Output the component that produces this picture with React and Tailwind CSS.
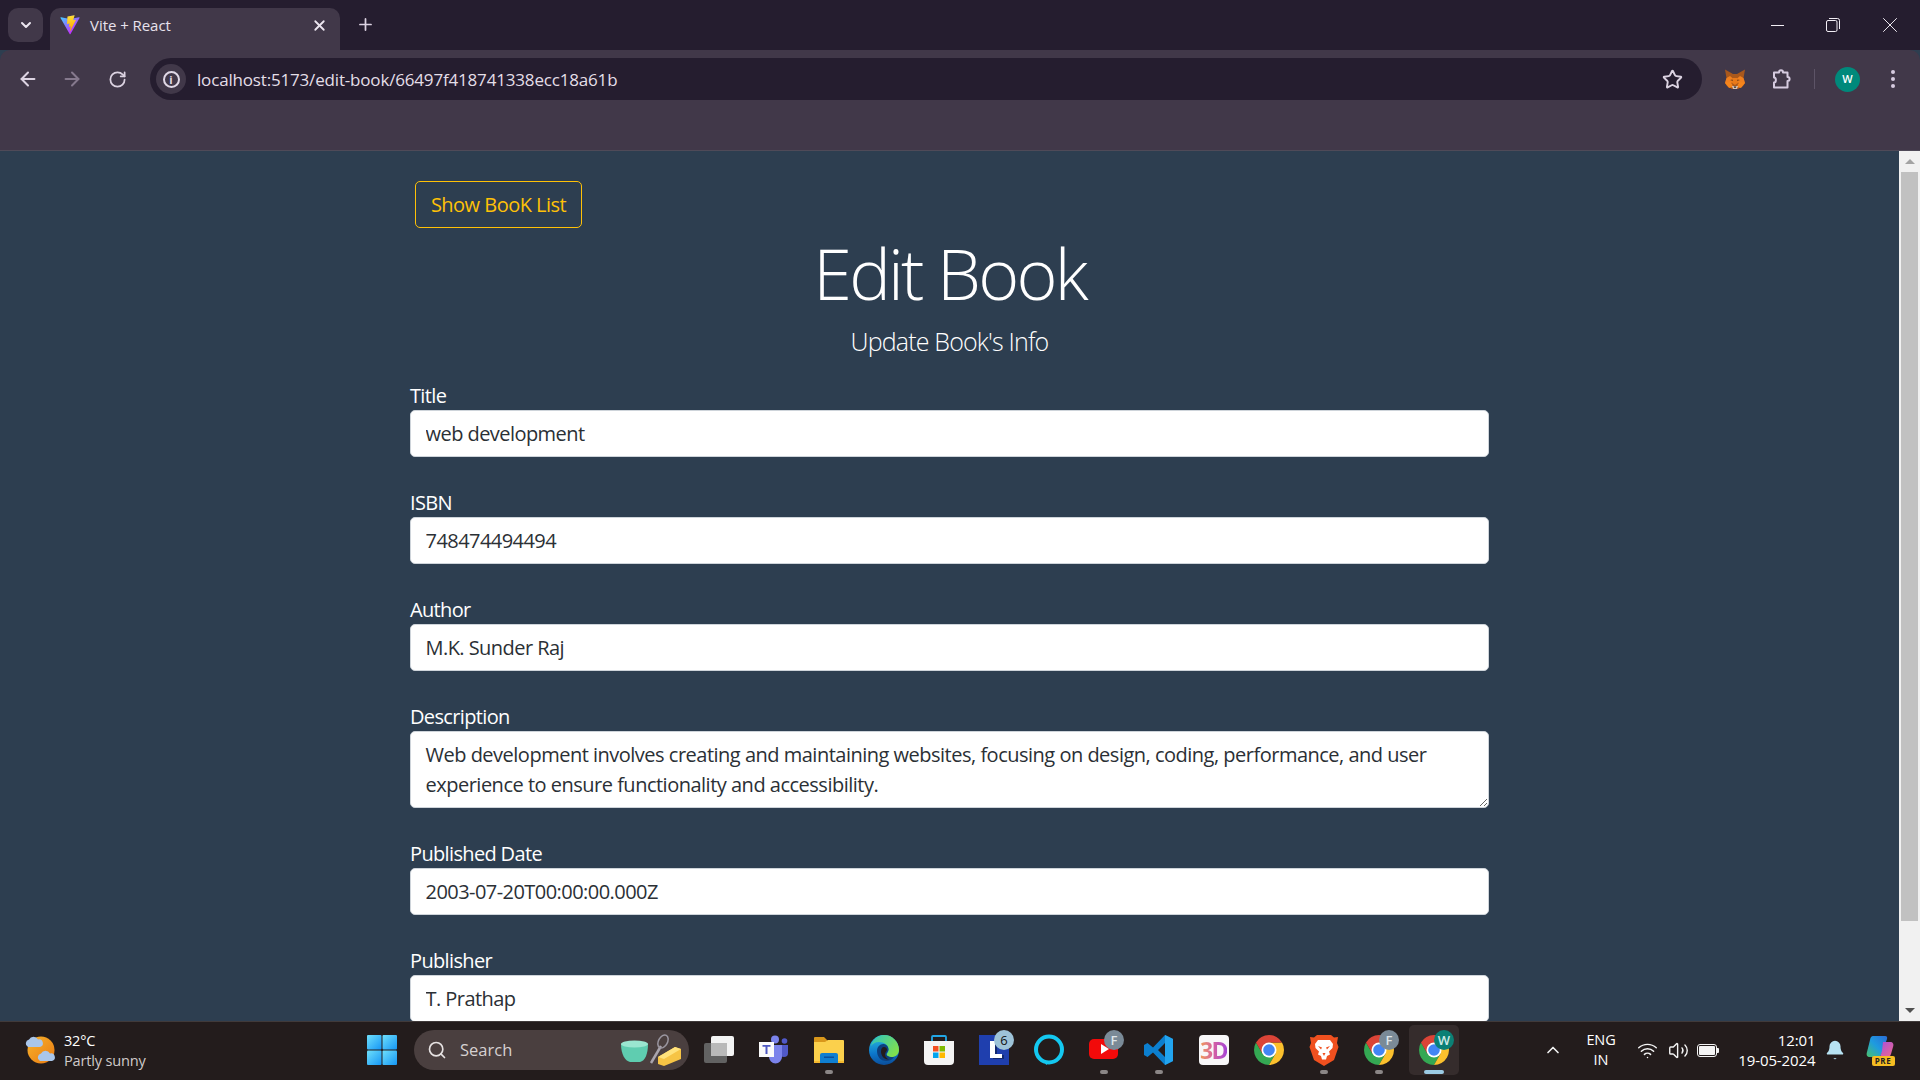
import React from "react";
import { ArrowLeft, ArrowRight, RotateCw, Star, ChevronDown, ChevronUp, X, Plus, Search, Wifi, Volume2, Bell } from "lucide-react";

const fields = [
  { label: "Title", value: "web development" },
  { label: "ISBN", value: "748474494494" },
  { label: "Author", value: "M.K. Sunder Raj" },
  {
    label: "Description",
    value:
      "Web development involves creating and maintaining websites, focusing on design, coding, performance, and user experience to ensure functionality and accessibility.",
    area: true,
  },
  { label: "Published Date", value: "2003-07-20T00:00:00.000Z" },
  { label: "Publisher", value: "T. Prathap" },
];

const ViteIcon = () => (
  <svg width="20" height="20" viewBox="0 0 410 404">
    <defs>
      <linearGradient id="vite-a" x1="6" y1="33" x2="235" y2="344" gradientUnits="userSpaceOnUse">
        <stop stopColor="#41D1FF" />
        <stop offset="1" stopColor="#BD34FE" />
      </linearGradient>
      <linearGradient id="vite-b" x1="194" y1="8" x2="236" y2="293" gradientUnits="userSpaceOnUse">
        <stop stopColor="#FFEA83" />
        <stop offset="0.08" stopColor="#FFDD35" />
        <stop offset="1" stopColor="#FFA800" />
      </linearGradient>
    </defs>
    <path
      fill="url(#vite-a)"
      d="M399.641 59.5246L215.643 388.545C211.844 395.338 202.084 395.378 198.228 388.618L10.5817 59.5563C6.38087 52.1896 12.6802 43.2665 21.0281 44.7586L205.223 77.6824C206.398 77.8924 207.601 77.8904 208.776 77.6763L389.119 44.8058C397.439 43.2894 403.768 52.1434 399.641 59.5246Z"
    />
    <path
      fill="url(#vite-b)"
      d="M292.965 1.5744L156.801 28.2552C154.563 28.6937 152.906 30.5903 152.771 32.8664L144.395 174.33C144.198 177.662 147.258 180.248 150.51 179.498L188.42 170.749C191.967 169.931 195.172 173.055 194.443 176.622L183.18 231.775C182.422 235.487 185.907 238.661 189.532 237.56L212.947 230.446C216.577 229.344 220.065 232.527 219.297 236.242L201.398 322.875C200.278 328.294 207.486 331.249 210.492 326.603L212.5 323.5L323.454 102.072C325.312 98.3645 322.108 94.137 318.036 94.9228L279.014 102.454C275.347 103.161 272.227 99.746 273.262 96.1583L298.731 7.86689C299.767 4.27314 296.636 0.855181 292.965 1.5744Z"
    />
  </svg>
);

const FoxIcon = () => (
  <svg width="22" height="22" viewBox="0 0 22 22">
    <path fill="#a9581c" d="M1 1.500l8 4.500h4l8-4.500-1.500 8.500L21 15l-2 3-5 3H8l-5-3-2-3 1.500-5z" />
    <path fill="#f0801f" d="M2.500 10l3.500-2 3.500 3-1 3.500-3.500 1L1 15zM19.500 10l-3.500-2-3.500 3 1 3.500 3.500 1L21 15z" />
    <path fill="#f6851b" d="M1 15l5-1 2 2 1 3-4 1zM21 15l-5-1-2 2-1 3 4 1z" />
    <path fill="#e87a1a" d="M9 10h4l1 5-3 2-3-2z" />
    <path fill="#6b3a16" d="M6 12l2.500-.5.5 1.500zM16 12l-2.500-.5-.5 1.500z" />
    <path fill="#d7c1b3" d="M8 18h6l-1 3H9z" />
    <path fill="#222" d="M9.700 18.500h2.600l-.5 1.200h-1.600z" />
  </svg>
);

const PuzzleIcon = () => (
  <svg width="22" height="22" viewBox="0 0 22 22" fill="none" stroke="#d6cbe0" strokeWidth="2">
    <path d="M4 4.500h5c0-3 4-3 4 0h4.500v4.500c2.800 0 2.800 4 0 4v6.500H4v-5c2.500 0 2.500-5 0-5z" strokeLinejoin="round" />
  </svg>
);

const RestoreIcon = () => (
  <svg width="14" height="14" viewBox="0 0 14 14" fill="none" stroke="#f2eef5" strokeWidth="1">
    <rect x="0.5" y="2.500" width="10.500" height="11" rx="1.500" />
    <path d="M3 .5h8.500a2 2 0 0 1 2 2V11" />
  </svg>
);

const WindowsLogo = () => (
  <svg width="30" height="30" viewBox="0 0 30 30">
    <defs>
      <linearGradient id="win-a" x1="0" y1="0" x2="1" y2="1">
        <stop stopColor="#6fe0fb" />
        <stop offset="1" stopColor="#1596f5" />
      </linearGradient>
    </defs>
    <rect x="0" y="0" width="14.500" height="14.500" rx="1" fill="url(#win-a)" />
    <rect x="15.500" y="0" width="14.500" height="14.500" rx="1" fill="url(#win-a)" />
    <rect x="0" y="15.500" width="14.500" height="14.500" rx="1" fill="url(#win-a)" />
    <rect x="15.500" y="15.500" width="14.500" height="14.500" rx="1" fill="url(#win-a)" />
  </svg>
);

const Weather = () => (
  <svg width="32" height="32" viewBox="0 0 32 32">
    <defs>
      <linearGradient id="sun-a" x1="0" y1="0" x2="1" y2="1">
        <stop stopColor="#f7b32b" />
        <stop offset="1" stopColor="#ea7a12" />
      </linearGradient>
    </defs>
    <circle cx="17" cy="16" r="13.500" fill="url(#sun-a)" />
    <path fill="#a9c6ea" d="M4 13a4 4 0 0 1 1-7.500 5 5 0 0 1 9 0 3.800 3.800 0 0 1 2 7.500z" />
    <path fill="#a9c6ea" d="M16 27a4 4 0 0 1 1-7.500 5 5 0 0 1 9 0 3.800 3.800 0 0 1 2 7.500z" />
  </svg>
);

const SearchArt = () => (
  <svg width="62" height="32" viewBox="0 0 62 32">
    <path fill="#5fcdb0" d="M1 10h27c0 10-3 17-8 18h-10C5 27 1 20 1 10z" />
    <ellipse cx="14.500" cy="10" rx="13.500" ry="3.500" fill="#9ae6d0" />
    <path stroke="#a9a4ad" strokeWidth="2.500" d="M31 29L41 12" fill="none" />
    <ellipse cx="43" cy="7.500" rx="4.500" ry="7" fill="none" stroke="#9a96a0" strokeWidth="1.500" transform="rotate(28 43 7.500)" />
    <path fill="#f6c445" d="M38 23l17-10 6 2v10l-17 7-6-2z" />
    <path fill="#ffe27c" d="M38 23l17-10 6 2-17 10z" />
  </svg>
);

const TaskView = () => (
  <svg width="32" height="32" viewBox="0 0 32 32">
    <rect x="1" y="9" width="23" height="20" rx="2" fill="#626262" />
    <rect x="8" y="2" width="23" height="20" rx="2" fill="#f3f3f3" />
    <rect x="8" y="9" width="16" height="13" fill="#b9b9b9" />
  </svg>
);

const Teams = () => (
  <svg width="32" height="32" viewBox="0 0 32 32">
    <circle cx="17" cy="5.500" r="4" fill="#7b83eb" />
    <circle cx="26.500" cy="7" r="2.800" fill="#5059c9" />
    <path fill="#5059c9" d="M22 11h8v8a4 4 0 0 1-8 0z" />
    <path fill="#7b83eb" d="M11 11h13v12a6.500 6.500 0 0 1-13 0z" />
    <rect x="1" y="8" width="15" height="15" fill="#fafafa" />
    <path fill="#4e58c2" d="M4.500 11h8v1.800h-3V20h-2v-7.200h-3z" />
  </svg>
);

const Folder = () => (
  <svg width="32" height="32" viewBox="0 0 32 32">
    <path fill="#d9971b" d="M1 4a1 1 0 0 1 1-1h9l4 4v4H1z" />
    <path fill="#fbd04c" d="M1 8h11l3-2h15a1 1 0 0 1 1 1v22H1z" />
    <path fill="#f5b82e" d="M1 27h30v2H1z" />
    <path fill="#0f7fd1" d="M7 21a2 2 0 0 1 2-2h14a2 2 0 0 1 2 2v8H7z" />
    <rect x="11" y="22.500" width="10" height="1.500" fill="#0a4f9c" />
  </svg>
);

const Edge = () => (
  <svg width="32" height="32" viewBox="0 0 32 32">
    <defs>
      <linearGradient id="edge-a" x1="0.2" y1="0" x2="0.3" y2="1">
        <stop stopColor="#2cc0dd" />
        <stop offset="0.6" stopColor="#0c78cc" />
        <stop offset="1" stopColor="#0b4f9c" />
      </linearGradient>
      <linearGradient id="edge-b" x1="0" y1="0" x2="1" y2="0.6">
        <stop stopColor="#2bc3c4" />
        <stop offset="1" stopColor="#80e04e" />
      </linearGradient>
    </defs>
    <circle cx="16" cy="16" r="15" fill="url(#edge-a)" />
    <path fill="url(#edge-b)" d="M16 1a15 15 0 0 1 15 15c0 4.500-3.500 7-7.500 7-3 0-5-1-5-2.500 0-1 2-1.500 2-5C20.500 11 16 8 11 8 7 8 4.500 10 3 12 4.500 6 9.500 1 16 1z" />
    <path fill="#0d3f7d" d="M9 17c0-4.500 3.500-7.500 7-7 3 .5 4.500 3 4.500 5.500 0 2-2 3-2 4.500 0 2.500 4 3.500 7.500 3-2 3-5 4-7.500 4C12 27 9 22 9 17z" />
    <path fill="#241c1c" d="M16 13c2 0 3 1.500 3 2.500 0 1.500-2 3-2 5 0 2.500 2 4 4 5-5 .5-8-4-8-8 0-2.500 1-4.500 3-4.500z" />
  </svg>
);

const Store = () => (
  <svg width="32" height="32" viewBox="0 0 32 32">
    <path fill="none" stroke="#22a7e6" strokeWidth="1.800" d="M9 8V3a1 1 0 0 1 1-1h12a1 1 0 0 1 1 1v5" />
    <path fill="#f4f4f4" d="M1 7h30v20a4 4 0 0 1-4 4H5a4 4 0 0 1-4-4z" />
    <rect x="10" y="12" width="5.500" height="5.500" fill="#f25022" />
    <rect x="16.500" y="12" width="5.500" height="5.500" fill="#7fba00" />
    <rect x="10" y="18.500" width="5.500" height="5.500" fill="#00a4ef" />
    <rect x="16.500" y="18.500" width="5.500" height="5.500" fill="#ffb900" />
  </svg>
);

const LIcon = () => (
  <svg width="30" height="30" viewBox="0 0 30 30">
    <rect width="30" height="30" fill="#1f3fae" />
    <path fill="#13296f" d="M14 7h4v13h7v4H14z" />
    <path fill="#fff" d="M11 6h5v13h7v4H11z" />
  </svg>
);

const Alexa = () => (
  <svg width="32" height="32" viewBox="0 0 32 32" fill="none">
    <circle cx="16" cy="15.500" r="13" stroke="#14c8f0" strokeWidth="4" />
    <path fill="#14c8f0" d="M12 27l1 4 5-3z" />
  </svg>
);

const Youtube = () => (
  <svg width="32" height="32" viewBox="0 0 32 32">
    <rect x="1" y="5" width="29" height="20" rx="5" fill="#f20a0a" />
    <path fill="#fff" d="M13 10l8 5-8 5z" />
  </svg>
);

const VSCode = () => (
  <svg width="32" height="32" viewBox="0 0 32 32">
    <path fill="#0c7fcf" fillRule="evenodd" d="M22 1l8 4v22l-8 4L10 18.500 4.500 23 1 21V11l3.500-2L10 13.500zM22 9l-7 7 7 7z" />
    <path fill="#22a4ef" d="M22 1l8 4v22l-8 4z" />
  </svg>
);

const ThirtyD = () => (
  <div className="flex h-[30px] w-[30px] items-center justify-center rounded-[4px] bg-[#f8f7f8]">
    <span className="bg-gradient-to-r from-[#f09a4e] via-[#d65fa0] to-[#a43fd6] bg-clip-text text-[23px] leading-none font-bold tracking-[-1.5px] text-transparent">
      3D
    </span>
  </div>
);

const Chrome = () => (
  <svg width="30" height="30" viewBox="0 0 30 30">
    <path fill="#34a853" transform="rotate(240 15 15)" d="M2.010 7.500A15 15 0 0 1 27.990 7.500L15 7.500 8.500 18.750Z" />
    <path fill="#fbc02d" transform="rotate(120 15 15)" d="M2.010 7.500A15 15 0 0 1 27.990 7.500L15 7.500 8.500 18.750Z" />
    <path fill="#db4437" d="M2.010 7.500A15 15 0 0 1 27.990 7.500L15 7.500 8.500 18.750Z" />
    <circle cx="15" cy="15" r="7.500" fill="#fff" />
    <circle cx="15" cy="15" r="5.800" fill="#4285f4" />
  </svg>
);

const Brave = () => (
  <svg width="30" height="32" viewBox="0 0 30 32">
    <path fill="#f0501f" d="M8 1h14l3 2.500L29 3l-1 6 1.500 4L25 26l-10 6L5 26 .5 13 2 9 1 3l4 .5z" />
    <path fill="#fff" d="M9 6h12l3 4-.5 4-3.500 3.500 1 3-3 1.500-1 3.500h-4L12 22l-3-1.500 1-3L6.500 14 6 10z" />
    <path fill="#f0501f" d="M9 12l4 1.500-1 2zM21 12l-4 1.500 1 2zM13.500 19h3l-1.500 3z" />
  </svg>
);

const Copilot = () => (
  <div className="relative h-[32px] w-[30px]">
    <svg width="30" height="26" viewBox="0 0 30 26">
      <defs>
        <linearGradient id="cop-a" x1="0" y1="1" x2="1" y2="0">
          <stop stopColor="#49c26c" />
          <stop offset="0.5" stopColor="#1e9be0" />
          <stop offset="1" stopColor="#2a6cd6" />
        </linearGradient>
        <linearGradient id="cop-b" x1="0" y1="0" x2="1" y2="1">
          <stop stopColor="#a24de0" />
          <stop offset="1" stopColor="#f06a8c" />
        </linearGradient>
      </defs>
      <path fill="url(#cop-a)" d="M8 2h12c2 0 2.500 1 2 3l-5 14c-1 3-3 4-6 4H5c-3 0-4-2-3-5l3-12C5.500 3 6.500 2 8 2z" />
      <path fill="url(#cop-b)" d="M18 8h7c3 0 4 2 3 5l-2 7c-1 3-3 4-5 4h-9c4-1 4-4 5-7z" />
    </svg>
    <span className="absolute right-0 bottom-0 flex h-[10px] w-[23px] items-center justify-center rounded-[2px] bg-[#f5bd22] text-[8px] font-bold tracking-[0.5px] text-[#222]">
      PRE
    </span>
  </div>
);

const Badge = ({ children, className }) => (
  <span
    className={`absolute top-[8px] right-[7px] flex h-[20px] w-[20px] items-center justify-center rounded-full text-[13px] leading-none ${className}`}
  >
    {children}
  </span>
);

const TaskItem = ({ children, running, active, badge }) => (
  <div className="relative flex h-full w-[55px] shrink-0 items-center justify-center">
    {active && <div className="absolute top-[3px] left-[3px] h-[50px] w-[50px] rounded-[5px] bg-[#352c2c]" />}
    <div className="relative flex h-[32px] w-[32px] items-center justify-center">{children}</div>
    {badge}
    {running && <span className="absolute top-[48px] left-[24px] h-[4px] w-[8px] rounded-full bg-[#8b8686]" />}
    {active && <span className="absolute top-[48px] left-[18px] h-[4px] w-[20px] rounded-full bg-[#9bcbe4]" />}
  </div>
);

export default function App() {
  return (
    <div className="flex h-screen w-full flex-col overflow-hidden bg-[#2d3e50] font-['Open_Sans',sans-serif]">
      {/* tab strip */}
      <div className="flex h-[50px] shrink-0 items-end bg-[#251d2f] pl-[8px]">
        <div className="mb-[8px] flex h-[34px] w-[35px] items-center justify-center rounded-[10px] bg-[#413849]">
          <ChevronDown size={16} strokeWidth={3} color="#ece6f0" />
        </div>
        <div className="ml-[7px] flex h-[42px] w-[290px] items-center rounded-t-[10px] bg-[#413849] pr-[12px] pb-[8px] pl-[10px]">
          <ViteIcon />
          <span className="ml-[10px] flex-1 text-[15px] tracking-[-0.05px] text-[#e8e2ec]">Vite + React</span>
          <X size={17} strokeWidth={2.5} color="#ece6f0" />
        </div>
        <div className="mb-[16px] ml-[15px] flex h-[20px] w-[20px] items-center justify-center">
          <Plus size={19} strokeWidth={2.2} color="#dcd3e2" />
        </div>
        <div className="flex-1" />
        <div className="mb-[13px] flex h-[24px] items-center pr-[17px]">
          <div className="mr-[42px] h-px w-[13px] bg-[#f2eef5]" />
          <div className="mr-[37px]">
            <RestoreIcon />
          </div>
          <X size={26} strokeWidth={0.9} color="#f2eef5" />
        </div>
      </div>

      {/* toolbar */}
      <div className="h-[101px] shrink-0 rounded-t-[10px] border-b border-[#4f4a58] bg-[#413849] pt-[8px]">
        <div className="flex h-[42px] items-center">
          <div className="flex w-[150px] items-center pl-[17px]">
            <ArrowLeft size={22} strokeWidth={2.2} color="#dcd3e2" />
            <div className="ml-[22px]">
              <ArrowRight size={22} strokeWidth={2.2} color="#85798d" />
            </div>
            <div className="ml-[25px]">
              <RotateCw size={19} strokeWidth={2.2} color="#dcd3e2" />
            </div>
          </div>
          <div className="flex h-[42px] w-[1552px] items-center rounded-full bg-[#251d2f] pl-[6px]">
            <div className="flex h-[30px] w-[30px] items-center justify-center rounded-full bg-[#413849]">
              <div className="flex h-[17px] w-[17px] items-center justify-center rounded-full border-2 border-[#e0d8e6] text-[11px] leading-none font-bold text-[#e0d8e6]">
                i
              </div>
            </div>
            <span className="ml-[11px] flex-1 pt-[1px] text-[17px] tracking-[-0.175px] text-[#e4dfe8]">
              localhost:5173/edit-book/66497f418741338ecc18a61b
            </span>
            <div className="mr-[19px]">
              <Star size={21} strokeWidth={2.2} color="#dcd3e2" />
            </div>
          </div>
          <div className="ml-[22px]">
            <FoxIcon />
          </div>
          <div className="ml-[24px]">
            <PuzzleIcon />
          </div>
          <div className="ml-[22px] h-[20px] w-px bg-[#5d5467]" />
          <div className="ml-[20px] flex h-[25px] w-[25px] items-center justify-center rounded-full bg-[#00897b] text-[11px] font-semibold text-white">
            W
          </div>
          <div className="ml-[31px] flex flex-col gap-[3px]">
            <span className="h-[4px] w-[4px] rounded-full bg-[#d6cbe0]" />
            <span className="h-[4px] w-[4px] rounded-full bg-[#d6cbe0]" />
            <span className="h-[4px] w-[4px] rounded-full bg-[#d6cbe0]" />
          </div>
        </div>
      </div>

      {/* page */}
      <div className="flex min-h-0 flex-1">
        <main className="min-w-0 flex-1 overflow-hidden">
          <div className="mx-auto w-[1079px] pt-[30px]">
            <button className="ml-[5px] block h-[47px] w-[167px] rounded-[5px] border border-[#ffc107] text-[20px] tracking-[-0.52px] text-[#ffc107]">
              Show BooK List
            </button>
            <h1 className="mt-[3px] text-center text-[70px] leading-[84px] font-light tracking-[-2.8px] text-white">
              Edit Book
            </h1>
            <p className="mt-[8px] text-center text-[25px] leading-[37.5px] font-light tracking-[-0.83px] text-white">
              Update Book's Info
            </p>
            <form className="mt-[19px]">
              {fields.map((f) => (
                <div key={f.label} className="mb-[30px]">
                  <label className="-mb-[1px] block pt-[1px] text-[20px] leading-[30px] tracking-[-0.65px] text-white">
                    {f.label}
                  </label>
                  {f.area ? (
                    <textarea
                      readOnly
                      value={f.value}
                      className="block h-[77px] w-full resize-y rounded-[5px] border border-[#ced4da] bg-white pt-[8.5px] pr-[15px] pb-[6.5px] pl-[14.5px] text-[20px] leading-[30px] tracking-[-0.5px] text-[#2b3035] outline-none"
                    />
                  ) : (
                    <input
                      readOnly
                      value={f.value}
                      className="block h-[47px] w-full rounded-[5px] border border-[#ced4da] bg-white pr-[15px] pl-[14.5px] text-[20px] tracking-[-0.55px] text-[#2b3035] outline-none"
                    />
                  )}
                </div>
              ))}
            </form>
          </div>
        </main>
        {/* scrollbar */}
        <div className="flex w-[21px] shrink-0 flex-col items-center bg-[#f1f1f1]">
          <div className="flex h-[21px] w-full items-center justify-center">
            <div className="h-0 w-0 border-x-[5px] border-b-[5px] border-x-transparent border-b-[#a3a3a3]" />
          </div>
          <div className="h-[749px] w-[17px] bg-[#c1c1c1]" />
          <div className="flex-1" />
          <div className="flex h-[21px] w-full items-center justify-center">
            <div className="h-0 w-0 border-x-[5px] border-t-[5px] border-x-transparent border-t-[#505050]" />
          </div>
        </div>
      </div>

      {/* taskbar */}
      <div className="flex h-[59px] shrink-0 items-center border-t border-[#403a3a] bg-[#231c1c] pb-[2px] text-white">
        <div className="flex w-[367px] shrink-0 items-center pl-[24px]">
          <Weather />
          <div className="ml-[8px] flex flex-col">
            <span className="text-[14.5px] leading-[20px] tracking-[-0.2px]">32°C</span>
            <span className="text-[14.6px] leading-[19px] tracking-[-0.2px] text-[#cfcaca]">Partly sunny</span>
          </div>
        </div>
        <WindowsLogo />
        <div className="ml-[17px] flex h-[40px] w-[275px] shrink-0 items-center rounded-full bg-[#4a3f3f] pl-[13px]">
          <Search size={20} strokeWidth={2} color="#e6e2e2" />
          <span className="ml-[13px] flex-1 text-[16.5px] text-[#d6d1d1]">Search</span>
          <div className="mr-[7px]">
            <SearchArt />
          </div>
        </div>
        <div className="ml-[2px] flex h-full shrink-0">
          <TaskItem><TaskView /></TaskItem>
          <TaskItem><Teams /></TaskItem>
          <TaskItem running><Folder /></TaskItem>
          <TaskItem><Edge /></TaskItem>
          <TaskItem><Store /></TaskItem>
          <TaskItem badge={<Badge className="bg-[#9ec3d8] text-[#111]">6</Badge>}><LIcon /></TaskItem>
          <TaskItem><Alexa /></TaskItem>
          <TaskItem running badge={<Badge className="bg-[#7a8a97] font-semibold text-[#dfe5ea]">F</Badge>}><Youtube /></TaskItem>
          <TaskItem running><VSCode /></TaskItem>
          <TaskItem><ThirtyD /></TaskItem>
          <TaskItem><Chrome /></TaskItem>
          <TaskItem running><Brave /></TaskItem>
          <TaskItem running badge={<Badge className="bg-[#7a8a97] font-semibold text-[#dfe5ea]">F</Badge>}><Chrome /></TaskItem>
          <TaskItem active badge={<Badge className="bg-[#0b8075] font-semibold text-[#cfeae6]">W</Badge>}><Chrome /></TaskItem>
        </div>
        <div className="ml-[82px] flex items-center">
          <ChevronUp size={20} strokeWidth={2} color="#f2f2f2" />
          <div className="ml-[19px] flex w-[38px] flex-col items-center text-[14.5px] leading-[20px] tracking-[-0.1px]">
            <span>ENG</span>
            <span>IN</span>
          </div>
          <div className="ml-[16.5px]">
            <Wifi size={21} strokeWidth={1.7} color="#f4f4f4" />
          </div>
          <div className="ml-[10px]">
            <Volume2 size={21} strokeWidth={1.6} color="#f4f4f4" />
          </div>
          <div className="ml-[8px] flex h-[13px] w-[20px] items-center rounded-[3px] border-[1.5px] border-[#f4f4f4] p-[1px]">
            <div className="h-full w-full rounded-[1px] bg-[#f4f4f4]" />
          </div>
          <div className="h-[5px] w-[2px] rounded-r-[1px] bg-[#f4f4f4]" />
          <div className="ml-[17px] flex w-[80px] flex-col items-end text-[15px] leading-[20px] tracking-[-0.1px] whitespace-nowrap">
            <span>12:01</span>
            <span>19-05-2024</span>
          </div>
          <div className="ml-[8px]">
            <Bell size={22} strokeWidth={0} fill="#b7e2f2" />
          </div>
          <div className="ml-[19px]">
            <Copilot />
          </div>
        </div>
      </div>
    </div>
  );
}
